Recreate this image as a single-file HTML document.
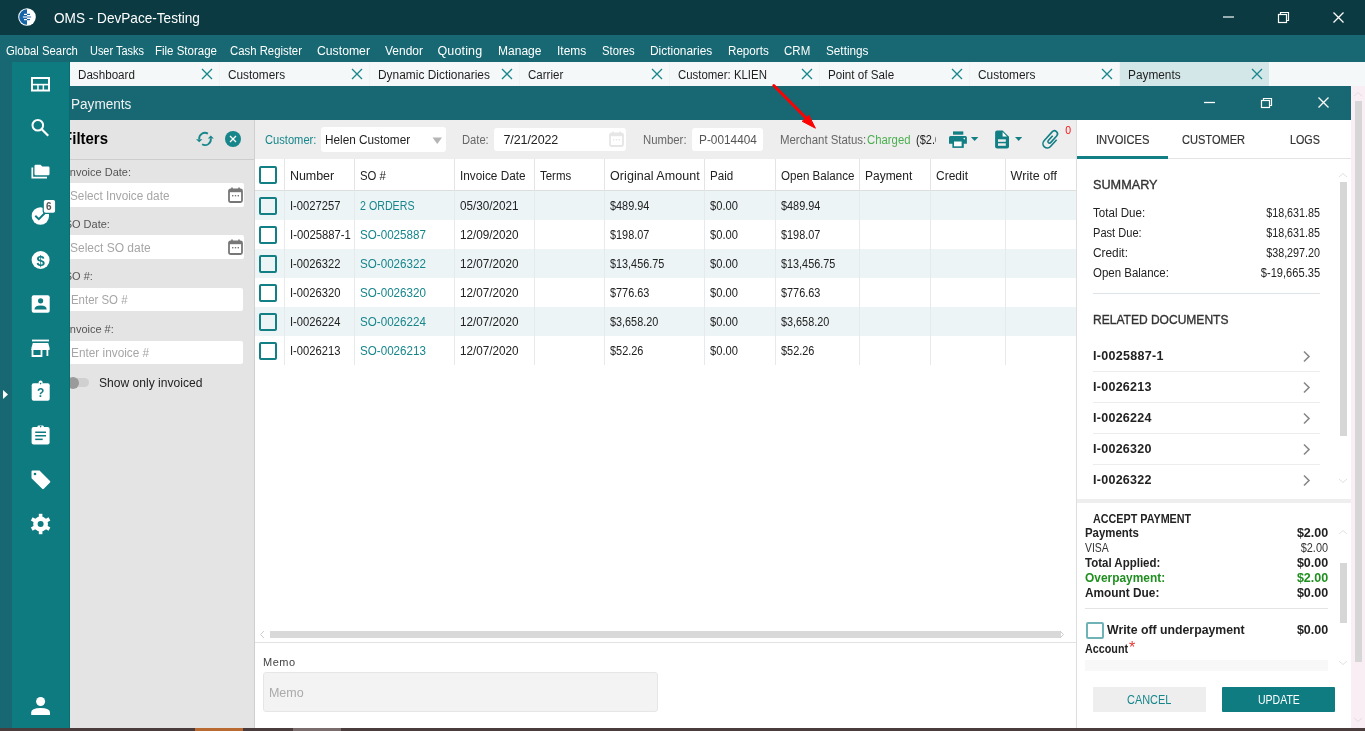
<!DOCTYPE html><html><head><meta charset="utf-8"><style>html,body{margin:0;padding:0;width:1365px;height:731px;overflow:hidden;background:#fff;position:relative;}div,span{box-sizing:border-box;}</style></head><body><div style="position:absolute;left:0;top:0;width:1365px;height:731px;overflow:hidden;will-change:transform"><div style="position:absolute;left:0px;top:0px;width:1365px;height:35px;background:#0b3a42;"></div>
<div style="position:absolute;left:0px;top:35px;width:1365px;height:27px;background:#176872;"></div>
<div style="position:absolute;left:0px;top:62px;width:12px;height:666px;background:#176872;"></div>
<div style="position:absolute;left:70px;top:62px;width:1295px;height:24px;background:#f4f8f9;"></div>
<div style="position:absolute;left:1120px;top:62px;width:149px;height:24px;background:#d3e7e9;"></div>
<div style="position:absolute;left:219px;top:62px;width:1px;height:24px;background:#eef3f4;"></div>
<div style="position:absolute;left:369px;top:62px;width:1px;height:24px;background:#eef3f4;"></div>
<div style="position:absolute;left:519px;top:62px;width:1px;height:24px;background:#eef3f4;"></div>
<div style="position:absolute;left:669px;top:62px;width:1px;height:24px;background:#eef3f4;"></div>
<div style="position:absolute;left:819px;top:62px;width:1px;height:24px;background:#eef3f4;"></div>
<div style="position:absolute;left:969px;top:62px;width:1px;height:24px;background:#eef3f4;"></div>
<div style="position:absolute;left:1119px;top:62px;width:1px;height:24px;background:#eef3f4;"></div>
<div style="position:absolute;left:70px;top:86px;width:1281px;height:34px;background:#176872;"></div>
<div style="position:absolute;left:70px;top:120px;width:185px;height:608px;background:#e4e4e4;"></div>
<div style="position:absolute;left:254px;top:120px;width:1px;height:608px;background:#cfcfcf;"></div>
<div style="position:absolute;left:255px;top:120px;width:821px;height:39px;background:#eeeeee;"></div>
<div style="position:absolute;left:255px;top:159px;width:821px;height:569px;background:#ffffff;"></div>
<div style="position:absolute;left:1076px;top:120px;width:1px;height:608px;background:#dedede;"></div>
<div style="position:absolute;left:1077px;top:120px;width:274px;height:608px;background:#ffffff;"></div>
<div style="position:absolute;left:1351px;top:86px;width:14px;height:642px;background:#f8eef3;"></div>
<div style="position:absolute;left:1355px;top:101px;width:7px;height:561px;background:#d6d6d6;"></div>
<div style="position:absolute;left:12px;top:62px;width:58px;height:666px;background:#0e7b81;"></div>
<div style="position:absolute;left:0px;top:728px;width:1365px;height:3px;background:#4a3b3d;"></div>
<div style="position:absolute;left:195px;top:728px;width:48px;height:3px;background:#b86a30;"></div>
<div style="position:absolute;left:293px;top:728px;width:48px;height:3px;background:#7a6b6c;"></div>
<div style="position:absolute;left:53.90px;top:10.15px;font:normal 15px/1 'Liberation Sans', sans-serif;color:#ffffff;white-space:pre;transform:scaleX(0.9069);transform-origin:left top;">OMS - DevPace-Testing</div>
<svg style="position:absolute;left:17px;top:7px" width="20" height="20" viewBox="0 0 20 20"><circle cx="10" cy="10" r="8.8" fill="#fff"/><path d="M10 2.2 A7.8 7.8 0 0 0 10 17.8 Z" fill="#1565a8"/><g fill="#ffffff"><rect x="7" y="6.8" width="3" height="1.2"/><rect x="5.9" y="9.2" width="4.1" height="1.6" fill="#b9cfe3"/><rect x="7" y="12" width="3" height="1.2"/></g><g fill="#1565a8"><rect x="10" y="6.8" width="3" height="1.2"/><rect x="10" y="9.2" width="4.1" height="1.6" fill="#7fa6cc"/><rect x="10" y="12" width="3" height="1.2"/></g></svg>
<svg style="position:absolute;left:1215px;top:8px" width="140" height="20"><path d="M8 9 H19" stroke="#e8eeee" stroke-width="1.3"/><rect x="63.5" y="6.5" width="8" height="8" fill="none" stroke="#fff" stroke-width="1.2"/><path d="M65.5 6.5 V4.5 H73.5 V12.5 H71.5" fill="none" stroke="#fff" stroke-width="1.2"/><path d="M118.5 4.5 L128.5 14.5 M128.5 4.5 L118.5 14.5" stroke="#fff" stroke-width="1.3"/></svg>
<div style="position:absolute;left:5.90px;top:45.17px;font:normal 12.5px/1 'Liberation Sans', sans-serif;color:#ffffff;white-space:pre;transform:scaleX(0.9077);transform-origin:left top;">Global Search</div>
<div style="position:absolute;left:89.50px;top:45.17px;font:normal 12.5px/1 'Liberation Sans', sans-serif;color:#ffffff;white-space:pre;transform:scaleX(0.8747);transform-origin:left top;">User Tasks</div>
<div style="position:absolute;left:154.50px;top:45.17px;font:normal 12.5px/1 'Liberation Sans', sans-serif;color:#ffffff;white-space:pre;transform:scaleX(0.9186);transform-origin:left top;">File Storage</div>
<div style="position:absolute;left:229.50px;top:45.17px;font:normal 12.5px/1 'Liberation Sans', sans-serif;color:#ffffff;white-space:pre;transform:scaleX(0.9079);transform-origin:left top;">Cash Register</div>
<div style="position:absolute;left:316.50px;top:45.17px;font:normal 12.5px/1 'Liberation Sans', sans-serif;color:#ffffff;white-space:pre;transform:scaleX(0.9777);transform-origin:left top;">Customer</div>
<div style="position:absolute;left:384.50px;top:45.17px;font:normal 12.5px/1 'Liberation Sans', sans-serif;color:#ffffff;white-space:pre;transform:scaleX(0.9579);transform-origin:left top;">Vendor</div>
<div style="position:absolute;left:437.40px;top:45.17px;font:normal 12.5px/1 'Liberation Sans', sans-serif;color:#ffffff;white-space:pre;letter-spacing:0.170px;">Quoting</div>
<div style="position:absolute;left:497.70px;top:45.17px;font:normal 12.5px/1 'Liberation Sans', sans-serif;color:#ffffff;white-space:pre;transform:scaleX(0.9618);transform-origin:left top;">Manage</div>
<div style="position:absolute;left:556.70px;top:45.17px;font:normal 12.5px/1 'Liberation Sans', sans-serif;color:#ffffff;white-space:pre;transform:scaleX(0.9573);transform-origin:left top;">Items</div>
<div style="position:absolute;left:601.50px;top:45.17px;font:normal 12.5px/1 'Liberation Sans', sans-serif;color:#ffffff;white-space:pre;transform:scaleX(0.9021);transform-origin:left top;">Stores</div>
<div style="position:absolute;left:649.70px;top:45.17px;font:normal 12.5px/1 'Liberation Sans', sans-serif;color:#ffffff;white-space:pre;transform:scaleX(0.9532);transform-origin:left top;">Dictionaries</div>
<div style="position:absolute;left:727.50px;top:45.17px;font:normal 12.5px/1 'Liberation Sans', sans-serif;color:#ffffff;white-space:pre;transform:scaleX(0.9303);transform-origin:left top;">Reports</div>
<div style="position:absolute;left:783.80px;top:45.17px;font:normal 12.5px/1 'Liberation Sans', sans-serif;color:#ffffff;white-space:pre;transform:scaleX(0.9210);transform-origin:left top;">CRM</div>
<div style="position:absolute;left:825.60px;top:45.17px;font:normal 12.5px/1 'Liberation Sans', sans-serif;color:#ffffff;white-space:pre;transform:scaleX(0.9395);transform-origin:left top;">Settings</div>
<div style="position:absolute;left:78.00px;top:68.97px;font:normal 12.5px/1 'Liberation Sans', sans-serif;color:#1e1e1e;white-space:pre;transform:scaleX(0.9309);transform-origin:left top;">Dashboard</div>
<div style="position:absolute;left:228.30px;top:68.97px;font:normal 12.5px/1 'Liberation Sans', sans-serif;color:#1e1e1e;white-space:pre;transform:scaleX(0.9455);transform-origin:left top;">Customers</div>
<div style="position:absolute;left:378.00px;top:68.97px;font:normal 12.5px/1 'Liberation Sans', sans-serif;color:#1e1e1e;white-space:pre;transform:scaleX(0.9536);transform-origin:left top;">Dynamic Dictionaries</div>
<div style="position:absolute;left:528.00px;top:68.97px;font:normal 12.5px/1 'Liberation Sans', sans-serif;color:#1e1e1e;white-space:pre;transform:scaleX(0.9220);transform-origin:left top;">Carrier</div>
<div style="position:absolute;left:678.00px;top:68.97px;font:normal 12.5px/1 'Liberation Sans', sans-serif;color:#1e1e1e;white-space:pre;transform:scaleX(0.9141);transform-origin:left top;">Customer: KLIEN</div>
<div style="position:absolute;left:828.10px;top:68.97px;font:normal 12.5px/1 'Liberation Sans', sans-serif;color:#1e1e1e;white-space:pre;transform:scaleX(0.9329);transform-origin:left top;">Point of Sale</div>
<div style="position:absolute;left:977.90px;top:68.97px;font:normal 12.5px/1 'Liberation Sans', sans-serif;color:#1e1e1e;white-space:pre;transform:scaleX(0.9506);transform-origin:left top;">Customers</div>
<div style="position:absolute;left:1127.80px;top:68.97px;font:normal 12.5px/1 'Liberation Sans', sans-serif;color:#1e1e1e;white-space:pre;transform:scaleX(0.9470);transform-origin:left top;">Payments</div>
<svg style="position:absolute;left:0;top:0" width="1365" height="90"><g stroke="#16868b" stroke-width="1.3" fill="none"><path d="M202 69 L212 79 M212 69 L202 79"/><path d="M352 69 L362 79 M362 69 L352 79"/><path d="M502 69 L512 79 M512 69 L502 79"/><path d="M652 69 L662 79 M662 69 L652 79"/><path d="M802 69 L812 79 M812 69 L802 79"/><path d="M952 69 L962 79 M962 69 L952 79"/><path d="M1102 69 L1112 79 M1112 69 L1102 79"/><path d="M1252 69 L1262 79 M1262 69 L1252 79"/></g></svg>
<div style="position:absolute;left:70.90px;top:97.10px;font:normal 14px/1 'Liberation Sans', sans-serif;color:#f2f2f2;white-space:pre;transform:scaleX(0.9698);transform-origin:left top;">Payments</div>
<svg style="position:absolute;left:1195px;top:90px" width="150" height="26"><path d="M9 12.5 H20" stroke="#fff" stroke-width="1.3"/><rect x="66.5" y="10.5" width="8" height="7" fill="none" stroke="#fff" stroke-width="1.2"/><path d="M68.5 10.5 V8.5 H76.5 V15.5 H74.5" fill="none" stroke="#fff" stroke-width="1.2"/><path d="M123.5 7.5 L133.5 17.5 M133.5 7.5 L123.5 17.5" stroke="#fff" stroke-width="1.3"/></svg>
<div style="position:absolute;left:70px;top:159px;width:184px;height:1px;background:#cdcdcd;"></div>
<div style="position:absolute;left:59.98px;top:131.20px;font:bold 16px/1 'Liberation Sans', sans-serif;color:#000000;white-space:pre;transform:scaleX(0.9359);transform-origin:right top;">Filters</div>
<svg style="position:absolute;left:193px;top:127px" width="52" height="25"><g fill="none" stroke="#16868b" stroke-width="1.8"><path d="M14.9 6.6 A5.8 5.8 0 0 0 6.2 12.2"/><path d="M9.1 17.3 A5.8 5.8 0 0 0 17.8 11.4"/></g><path d="M3 12.2 H9.4 L6.2 15.2 Z" fill="#16868b"/><path d="M14.8 11.4 H20.8 L17.8 8.6 Z" fill="#16868b"/><circle cx="40" cy="12" r="8" fill="#16868b"/><path d="M37 9 L43 15 M43 9 L37 15" stroke="#fff" stroke-width="1.3"/></svg>
<div style="position:absolute;left:66.80px;top:166.65px;font:normal 11px/1 'Liberation Sans', sans-serif;color:#555555;white-space:pre;">Invoice Date:</div>
<div style="position:absolute;left:62px;top:183px;width:182px;height:24px;background:#ffffff;border-radius:2px;"></div>
<div style="position:absolute;left:70.00px;top:189.80px;font:normal 12px/1 'Liberation Sans', sans-serif;color:#a6a6a6;white-space:pre;transform:scaleX(0.9810);transform-origin:left top;">Select Invoice date</div>
<div style="position:absolute;left:64.65px;top:218.65px;font:normal 11px/1 'Liberation Sans', sans-serif;color:#555555;white-space:pre;">SO Date:</div>
<div style="position:absolute;left:62px;top:235px;width:182px;height:24px;background:#ffffff;border-radius:2px;"></div>
<div style="position:absolute;left:70.00px;top:241.80px;font:normal 12px/1 'Liberation Sans', sans-serif;color:#a6a6a6;white-space:pre;">Select SO date</div>
<svg style="position:absolute;left:227.5px;top:187px" width="16" height="17"><rect x="1" y="2.5" width="13" height="12.5" rx="1.5" fill="none" stroke="#777777" stroke-width="1.8"/><rect x="1" y="2" width="13" height="3.2" fill="#777777"/><rect x="3.2" y="0.5" width="1.6" height="3" fill="#777777"/><rect x="10.2" y="0.5" width="1.6" height="3" fill="#777777"/><rect x="4" y="8" width="1.4" height="1.4" fill="#777777"/><rect x="6.8" y="8" width="1.4" height="1.4" fill="#777777"/><rect x="9.6" y="8" width="1.4" height="1.4" fill="#777777"/></svg>
<svg style="position:absolute;left:227.5px;top:239px" width="16" height="17"><rect x="1" y="2.5" width="13" height="12.5" rx="1.5" fill="none" stroke="#777777" stroke-width="1.8"/><rect x="1" y="2" width="13" height="3.2" fill="#777777"/><rect x="3.2" y="0.5" width="1.6" height="3" fill="#777777"/><rect x="10.2" y="0.5" width="1.6" height="3" fill="#777777"/><rect x="4" y="8" width="1.4" height="1.4" fill="#777777"/><rect x="6.8" y="8" width="1.4" height="1.4" fill="#777777"/><rect x="9.6" y="8" width="1.4" height="1.4" fill="#777777"/></svg>
<div style="position:absolute;left:64.78px;top:270.65px;font:normal 11px/1 'Liberation Sans', sans-serif;color:#555555;white-space:pre;">SO #:</div>
<div style="position:absolute;left:62px;top:288px;width:181px;height:23px;background:#ffffff;border-radius:2px;"></div>
<div style="position:absolute;left:71.20px;top:293.80px;font:normal 12px/1 'Liberation Sans', sans-serif;color:#a6a6a6;white-space:pre;transform:scaleX(0.9525);transform-origin:left top;">Enter SO #</div>
<div style="position:absolute;left:66.71px;top:323.65px;font:normal 11px/1 'Liberation Sans', sans-serif;color:#555555;white-space:pre;">Invoice #:</div>
<div style="position:absolute;left:62px;top:341px;width:181px;height:23px;background:#ffffff;border-radius:2px;"></div>
<div style="position:absolute;left:71.20px;top:346.80px;font:normal 12px/1 'Liberation Sans', sans-serif;color:#a6a6a6;white-space:pre;transform:scaleX(0.9848);transform-origin:left top;">Enter invoice #</div>
<div style="position:absolute;left:68px;top:378px;width:21px;height:9px;background:#d0d0d0;border-radius:5px;"></div>
<div style="position:absolute;left:67px;top:376.5px;width:12px;height:12px;background:#9a9a9a;border-radius:50%;"></div>
<div style="position:absolute;left:98.50px;top:377.38px;font:normal 12.5px/1 'Liberation Sans', sans-serif;color:#222222;white-space:pre;transform:scaleX(0.9659);transform-origin:left top;">Show only invoiced</div>
<div style="position:absolute;left:265.00px;top:134.30px;font:normal 12px/1 'Liberation Sans', sans-serif;color:#16868b;white-space:pre;transform:scaleX(0.9290);transform-origin:left top;">Customer:</div>
<div style="position:absolute;left:321px;top:127px;width:125px;height:25px;background:#ffffff;border-radius:3px;"></div>
<div style="position:absolute;left:325.00px;top:133.88px;font:normal 12.5px/1 'Liberation Sans', sans-serif;color:#222222;white-space:pre;transform:scaleX(0.9426);transform-origin:left top;">Helen Customer</div>
<svg style="position:absolute;left:432px;top:137px" width="11" height="8"><path d="M0.5 0.5 H10 L5.25 7 Z" fill="#b5b5b5"/></svg>
<div style="position:absolute;left:462.10px;top:134.30px;font:normal 12px/1 'Liberation Sans', sans-serif;color:#666666;white-space:pre;transform:scaleX(0.9318);transform-origin:left top;">Date:</div>
<div style="position:absolute;left:494px;top:128px;width:132px;height:23px;background:#ffffff;border-radius:3px;"></div>
<div style="position:absolute;left:503.50px;top:133.88px;font:normal 12.5px/1 'Liberation Sans', sans-serif;color:#222222;white-space:pre;letter-spacing:-0.101px;">7/21/2022</div>
<svg style="position:absolute;left:608.5px;top:131px" width="16" height="17"><rect x="1" y="2.5" width="13" height="12.5" rx="1.5" fill="none" stroke="#e6e6e6" stroke-width="1.8"/><rect x="1" y="2" width="13" height="3.2" fill="#e6e6e6"/><rect x="3.2" y="0.5" width="1.6" height="3" fill="#e6e6e6"/><rect x="10.2" y="0.5" width="1.6" height="3" fill="#e6e6e6"/><rect x="4" y="8" width="1.4" height="1.4" fill="#e6e6e6"/><rect x="6.8" y="8" width="1.4" height="1.4" fill="#e6e6e6"/><rect x="9.6" y="8" width="1.4" height="1.4" fill="#e6e6e6"/></svg>
<div style="position:absolute;left:643.20px;top:134.30px;font:normal 12px/1 'Liberation Sans', sans-serif;color:#666666;white-space:pre;transform:scaleX(0.9463);transform-origin:left top;">Number:</div>
<div style="position:absolute;left:692px;top:128px;width:71px;height:23px;background:#ffffff;border-radius:3px;"></div>
<div style="position:absolute;left:698.80px;top:133.88px;font:normal 12.5px/1 'Liberation Sans', sans-serif;color:#555555;white-space:pre;transform:scaleX(0.9473);transform-origin:left top;">P-0014404</div>
<div style="position:absolute;left:780.20px;top:134.30px;font:normal 12px/1 'Liberation Sans', sans-serif;color:#666666;white-space:pre;transform:scaleX(0.9507);transform-origin:left top;">Merchant Status:</div>
<div style="position:absolute;left:867.10px;top:134.30px;font:normal 12px/1 'Liberation Sans', sans-serif;color:#4caf50;white-space:pre;transform:scaleX(0.9460);transform-origin:left top;">Charged</div>
<div style="position:absolute;left:915px;top:128px;width:21px;height:22px;overflow:hidden"><div style="position:absolute;left:1px;top:5.90px;font:12.5px/1 'Liberation Sans', sans-serif;color:#222;white-space:pre;transform:scaleX(0.88);transform-origin:left top">($2.00)</div></div>
<svg style="position:absolute;left:940px;top:122px" width="90" height="30"><g fill="#127f85"><rect x="13" y="9.4" width="10.3" height="3.3"/><path d="M9 15.5 Q9 14 10.5 14 H25.4 Q26.9 14 26.9 15.5 V21.8 H9 Z"/><rect x="12.4" y="18.3" width="11.4" height="7.6"/><path d="M30.9 15 H38.4 L34.65 19 Z"/><path d="M55.1 10.4 Q55.1 8.4 57.1 8.4 H62.6 L69 14.8 V24.5 Q69 26.5 67 26.5 H57.1 Q55.1 26.5 55.1 24.5 Z"/><path d="M75 15 H82.2 L78.6 19 Z"/></g><rect x="14" y="19.5" width="7.6" height="4.8" fill="#fff"/><circle cx="24.3" cy="16.6" r="0.8" fill="#fff"/><path d="M62.6 9.9 V14.4 H67 Z" fill="#fff"/><rect x="58" y="17.3" width="7.8" height="2.5" fill="#eee"/><rect x="58" y="21.3" width="7.8" height="2.5" fill="#eee"/></svg>
<svg style="position:absolute;left:1038px;top:126px" width="26" height="26" viewBox="0 0 26 26"><g transform="translate(13.3 13.2) rotate(42)"><path d="M4.3 -3.2 V6 A4.3 4.3 0 0 1 -4.3 6 V-6 A3.05 3.05 0 0 1 1.8 -6 V3 A1.55 1.55 0 0 1 -1.3 3 V-3.5" fill="none" stroke="#127f85" stroke-width="1.6"/></g></svg>
<div style="position:absolute;left:1065.30px;top:125.08px;font:normal 10.5px/1 'Liberation Sans', sans-serif;color:#ff1010;white-space:pre;">0</div>
<div style="position:absolute;left:255px;top:190px;width:821px;height:1px;background:#dedede;"></div>
<div style="position:absolute;left:284px;top:159px;width:1px;height:206px;background:#e4e4e4;"></div>
<div style="position:absolute;left:354px;top:159px;width:1px;height:206px;background:#e4e4e4;"></div>
<div style="position:absolute;left:454px;top:159px;width:1px;height:206px;background:#e4e4e4;"></div>
<div style="position:absolute;left:534px;top:159px;width:1px;height:206px;background:#e4e4e4;"></div>
<div style="position:absolute;left:604px;top:159px;width:1px;height:206px;background:#e4e4e4;"></div>
<div style="position:absolute;left:704px;top:159px;width:1px;height:206px;background:#e4e4e4;"></div>
<div style="position:absolute;left:775px;top:159px;width:1px;height:206px;background:#e4e4e4;"></div>
<div style="position:absolute;left:859px;top:159px;width:1px;height:206px;background:#e4e4e4;"></div>
<div style="position:absolute;left:930px;top:159px;width:1px;height:206px;background:#e4e4e4;"></div>
<div style="position:absolute;left:1005px;top:159px;width:1px;height:206px;background:#e4e4e4;"></div>
<div style="position:absolute;left:255px;top:191px;width:821px;height:29px;background:#edf4f6;"></div>
<div style="position:absolute;left:255px;top:249px;width:821px;height:29px;background:#edf4f6;"></div>
<div style="position:absolute;left:255px;top:307px;width:821px;height:29px;background:#edf4f6;"></div>
<div style="position:absolute;left:284px;top:191px;width:1px;height:174px;background:#e6eaec;"></div>
<div style="position:absolute;left:354px;top:191px;width:1px;height:174px;background:#e6eaec;"></div>
<div style="position:absolute;left:454px;top:191px;width:1px;height:174px;background:#e6eaec;"></div>
<div style="position:absolute;left:534px;top:191px;width:1px;height:174px;background:#e6eaec;"></div>
<div style="position:absolute;left:604px;top:191px;width:1px;height:174px;background:#e6eaec;"></div>
<div style="position:absolute;left:704px;top:191px;width:1px;height:174px;background:#e6eaec;"></div>
<div style="position:absolute;left:775px;top:191px;width:1px;height:174px;background:#e6eaec;"></div>
<div style="position:absolute;left:859px;top:191px;width:1px;height:174px;background:#e6eaec;"></div>
<div style="position:absolute;left:930px;top:191px;width:1px;height:174px;background:#e6eaec;"></div>
<div style="position:absolute;left:1005px;top:191px;width:1px;height:174px;background:#e6eaec;"></div>
<div style="position:absolute;left:289.90px;top:169.88px;font:normal 12.5px/1 'Liberation Sans', sans-serif;color:#222222;white-space:pre;letter-spacing:-0.034px;">Number</div>
<div style="position:absolute;left:359.90px;top:169.88px;font:normal 12.5px/1 'Liberation Sans', sans-serif;color:#222222;white-space:pre;transform:scaleX(0.9091);transform-origin:left top;">SO #</div>
<div style="position:absolute;left:459.90px;top:169.88px;font:normal 12.5px/1 'Liberation Sans', sans-serif;color:#222222;white-space:pre;transform:scaleX(0.9433);transform-origin:left top;">Invoice Date</div>
<div style="position:absolute;left:540.00px;top:169.88px;font:normal 12.5px/1 'Liberation Sans', sans-serif;color:#222222;white-space:pre;transform:scaleX(0.9173);transform-origin:left top;">Terms</div>
<div style="position:absolute;left:610.10px;top:169.88px;font:normal 12.5px/1 'Liberation Sans', sans-serif;color:#222222;white-space:pre;letter-spacing:0.047px;">Original Amount</div>
<div style="position:absolute;left:709.80px;top:169.88px;font:normal 12.5px/1 'Liberation Sans', sans-serif;color:#222222;white-space:pre;transform:scaleX(0.9280);transform-origin:left top;">Paid</div>
<div style="position:absolute;left:781.00px;top:169.88px;font:normal 12.5px/1 'Liberation Sans', sans-serif;color:#222222;white-space:pre;transform:scaleX(0.9267);transform-origin:left top;">Open Balance</div>
<div style="position:absolute;left:865.30px;top:169.88px;font:normal 12.5px/1 'Liberation Sans', sans-serif;color:#222222;white-space:pre;transform:scaleX(0.9577);transform-origin:left top;">Payment</div>
<div style="position:absolute;left:936.20px;top:169.88px;font:normal 12.5px/1 'Liberation Sans', sans-serif;color:#222222;white-space:pre;transform:scaleX(0.9585);transform-origin:left top;">Credit</div>
<div style="position:absolute;left:1010.60px;top:169.88px;font:normal 12.5px/1 'Liberation Sans', sans-serif;color:#222222;white-space:pre;letter-spacing:0.051px;">Write off</div>
<div style="position:absolute;left:259px;top:166px;width:18px;height:18px;background:transparent;border:2.2px solid #127f85;border-radius:2px;"></div>
<div style="position:absolute;left:259px;top:197px;width:18px;height:18px;background:transparent;border:2.2px solid #127f85;border-radius:2px;"></div>
<div style="position:absolute;left:289.70px;top:199.68px;font:normal 12.5px/1 'Liberation Sans', sans-serif;color:#222222;white-space:pre;transform:scaleX(0.8949);transform-origin:left top;">I-0027257</div>
<div style="position:absolute;left:360.00px;top:199.68px;font:normal 12.5px/1 'Liberation Sans', sans-serif;color:#16868b;white-space:pre;transform:scaleX(0.8537);transform-origin:left top;">2 ORDERS</div>
<div style="position:absolute;left:459.50px;top:199.68px;font:normal 12.5px/1 'Liberation Sans', sans-serif;color:#222222;white-space:pre;transform:scaleX(0.9373);transform-origin:left top;">05/30/2021</div>
<div style="position:absolute;left:609.90px;top:199.68px;font:normal 12.5px/1 'Liberation Sans', sans-serif;color:#222222;white-space:pre;transform:scaleX(0.8713);transform-origin:left top;">$489.94</div>
<div style="position:absolute;left:709.90px;top:199.68px;font:normal 12.5px/1 'Liberation Sans', sans-serif;color:#222222;white-space:pre;transform:scaleX(0.8916);transform-origin:left top;">$0.00</div>
<div style="position:absolute;left:781.00px;top:199.68px;font:normal 12.5px/1 'Liberation Sans', sans-serif;color:#222222;white-space:pre;transform:scaleX(0.8713);transform-origin:left top;">$489.94</div>
<div style="position:absolute;left:259px;top:226px;width:18px;height:18px;background:transparent;border:2.2px solid #127f85;border-radius:2px;"></div>
<div style="position:absolute;left:289.70px;top:228.68px;font:normal 12.5px/1 'Liberation Sans', sans-serif;color:#222222;white-space:pre;transform:scaleX(0.9033);transform-origin:left top;">I-0025887-1</div>
<div style="position:absolute;left:360.00px;top:228.68px;font:normal 12.5px/1 'Liberation Sans', sans-serif;color:#16868b;white-space:pre;transform:scaleX(0.9300);transform-origin:left top;">SO-0025887</div>
<div style="position:absolute;left:459.50px;top:228.68px;font:normal 12.5px/1 'Liberation Sans', sans-serif;color:#222222;white-space:pre;transform:scaleX(0.9373);transform-origin:left top;">12/09/2020</div>
<div style="position:absolute;left:609.90px;top:228.68px;font:normal 12.5px/1 'Liberation Sans', sans-serif;color:#222222;white-space:pre;transform:scaleX(0.8713);transform-origin:left top;">$198.07</div>
<div style="position:absolute;left:709.90px;top:228.68px;font:normal 12.5px/1 'Liberation Sans', sans-serif;color:#222222;white-space:pre;transform:scaleX(0.8916);transform-origin:left top;">$0.00</div>
<div style="position:absolute;left:781.00px;top:228.68px;font:normal 12.5px/1 'Liberation Sans', sans-serif;color:#222222;white-space:pre;transform:scaleX(0.8713);transform-origin:left top;">$198.07</div>
<div style="position:absolute;left:259px;top:255px;width:18px;height:18px;background:transparent;border:2.2px solid #127f85;border-radius:2px;"></div>
<div style="position:absolute;left:289.70px;top:257.68px;font:normal 12.5px/1 'Liberation Sans', sans-serif;color:#222222;white-space:pre;transform:scaleX(0.8949);transform-origin:left top;">I-0026322</div>
<div style="position:absolute;left:360.00px;top:257.68px;font:normal 12.5px/1 'Liberation Sans', sans-serif;color:#16868b;white-space:pre;transform:scaleX(0.9300);transform-origin:left top;">SO-0026322</div>
<div style="position:absolute;left:459.50px;top:257.68px;font:normal 12.5px/1 'Liberation Sans', sans-serif;color:#222222;white-space:pre;transform:scaleX(0.9373);transform-origin:left top;">12/07/2020</div>
<div style="position:absolute;left:609.90px;top:257.68px;font:normal 12.5px/1 'Liberation Sans', sans-serif;color:#222222;white-space:pre;transform:scaleX(0.8674);transform-origin:left top;">$13,456.75</div>
<div style="position:absolute;left:709.90px;top:257.68px;font:normal 12.5px/1 'Liberation Sans', sans-serif;color:#222222;white-space:pre;transform:scaleX(0.8916);transform-origin:left top;">$0.00</div>
<div style="position:absolute;left:781.00px;top:257.68px;font:normal 12.5px/1 'Liberation Sans', sans-serif;color:#222222;white-space:pre;transform:scaleX(0.8674);transform-origin:left top;">$13,456.75</div>
<div style="position:absolute;left:259px;top:284px;width:18px;height:18px;background:transparent;border:2.2px solid #127f85;border-radius:2px;"></div>
<div style="position:absolute;left:289.70px;top:286.68px;font:normal 12.5px/1 'Liberation Sans', sans-serif;color:#222222;white-space:pre;transform:scaleX(0.8949);transform-origin:left top;">I-0026320</div>
<div style="position:absolute;left:360.00px;top:286.68px;font:normal 12.5px/1 'Liberation Sans', sans-serif;color:#16868b;white-space:pre;transform:scaleX(0.9300);transform-origin:left top;">SO-0026320</div>
<div style="position:absolute;left:459.50px;top:286.68px;font:normal 12.5px/1 'Liberation Sans', sans-serif;color:#222222;white-space:pre;transform:scaleX(0.9373);transform-origin:left top;">12/07/2020</div>
<div style="position:absolute;left:609.90px;top:286.68px;font:normal 12.5px/1 'Liberation Sans', sans-serif;color:#222222;white-space:pre;transform:scaleX(0.8713);transform-origin:left top;">$776.63</div>
<div style="position:absolute;left:709.90px;top:286.68px;font:normal 12.5px/1 'Liberation Sans', sans-serif;color:#222222;white-space:pre;transform:scaleX(0.8916);transform-origin:left top;">$0.00</div>
<div style="position:absolute;left:781.00px;top:286.68px;font:normal 12.5px/1 'Liberation Sans', sans-serif;color:#222222;white-space:pre;transform:scaleX(0.8713);transform-origin:left top;">$776.63</div>
<div style="position:absolute;left:259px;top:313px;width:18px;height:18px;background:transparent;border:2.2px solid #127f85;border-radius:2px;"></div>
<div style="position:absolute;left:289.70px;top:315.68px;font:normal 12.5px/1 'Liberation Sans', sans-serif;color:#222222;white-space:pre;transform:scaleX(0.8949);transform-origin:left top;">I-0026224</div>
<div style="position:absolute;left:360.00px;top:315.68px;font:normal 12.5px/1 'Liberation Sans', sans-serif;color:#16868b;white-space:pre;transform:scaleX(0.9300);transform-origin:left top;">SO-0026224</div>
<div style="position:absolute;left:459.50px;top:315.68px;font:normal 12.5px/1 'Liberation Sans', sans-serif;color:#222222;white-space:pre;transform:scaleX(0.9373);transform-origin:left top;">12/07/2020</div>
<div style="position:absolute;left:609.90px;top:315.68px;font:normal 12.5px/1 'Liberation Sans', sans-serif;color:#222222;white-space:pre;transform:scaleX(0.8680);transform-origin:left top;">$3,658.20</div>
<div style="position:absolute;left:709.90px;top:315.68px;font:normal 12.5px/1 'Liberation Sans', sans-serif;color:#222222;white-space:pre;transform:scaleX(0.8916);transform-origin:left top;">$0.00</div>
<div style="position:absolute;left:781.00px;top:315.68px;font:normal 12.5px/1 'Liberation Sans', sans-serif;color:#222222;white-space:pre;transform:scaleX(0.8680);transform-origin:left top;">$3,658.20</div>
<div style="position:absolute;left:259px;top:342px;width:18px;height:18px;background:transparent;border:2.2px solid #127f85;border-radius:2px;"></div>
<div style="position:absolute;left:289.70px;top:344.68px;font:normal 12.5px/1 'Liberation Sans', sans-serif;color:#222222;white-space:pre;transform:scaleX(0.8949);transform-origin:left top;">I-0026213</div>
<div style="position:absolute;left:360.00px;top:344.68px;font:normal 12.5px/1 'Liberation Sans', sans-serif;color:#16868b;white-space:pre;transform:scaleX(0.9300);transform-origin:left top;">SO-0026213</div>
<div style="position:absolute;left:459.50px;top:344.68px;font:normal 12.5px/1 'Liberation Sans', sans-serif;color:#222222;white-space:pre;transform:scaleX(0.9373);transform-origin:left top;">12/07/2020</div>
<div style="position:absolute;left:609.90px;top:344.68px;font:normal 12.5px/1 'Liberation Sans', sans-serif;color:#222222;white-space:pre;transform:scaleX(0.8728);transform-origin:left top;">$52.26</div>
<div style="position:absolute;left:709.90px;top:344.68px;font:normal 12.5px/1 'Liberation Sans', sans-serif;color:#222222;white-space:pre;transform:scaleX(0.8916);transform-origin:left top;">$0.00</div>
<div style="position:absolute;left:781.00px;top:344.68px;font:normal 12.5px/1 'Liberation Sans', sans-serif;color:#222222;white-space:pre;transform:scaleX(0.8728);transform-origin:left top;">$52.26</div>
<div style="position:absolute;left:270px;top:631px;width:791px;height:7px;background:#d9d9d9;"></div>
<svg style="position:absolute;left:258px;top:629px" width="810" height="12"><path d="M6 2 L2.5 5.5 L6 9" fill="none" stroke="#ccc" stroke-width="1"/><path d="M802 2 L805.5 5.5 L802 9" fill="none" stroke="#ccc" stroke-width="1"/></svg>
<div style="position:absolute;left:255px;top:642px;width:821px;height:1px;background:#e2e2e2;"></div>
<div style="position:absolute;left:263.10px;top:656.65px;font:normal 11px/1 'Liberation Sans', sans-serif;color:#444444;white-space:pre;letter-spacing:0.446px;">Memo</div>
<div style="position:absolute;left:263px;top:672px;width:395px;height:40px;background:#f3f3f3;border:1px solid #e6e6e6;border-radius:3px;"></div>
<div style="position:absolute;left:268.90px;top:687.17px;font:normal 12.5px/1 'Liberation Sans', sans-serif;color:#aaaaaa;white-space:pre;">Memo</div>
<div style="position:absolute;left:1077px;top:158px;width:274px;height:1px;background:#e3e3e3;"></div>
<div style="position:absolute;left:1077px;top:156px;width:91px;height:3px;background:#127f85;"></div>
<div style="position:absolute;left:1095.90px;top:133.05px;font:normal 13px/1 'Liberation Sans', sans-serif;color:#333333;white-space:pre;transform:scaleX(0.8605);transform-origin:left top;-webkit-text-stroke:0.2px #333;">INVOICES</div>
<div style="position:absolute;left:1182.30px;top:133.05px;font:normal 13px/1 'Liberation Sans', sans-serif;color:#333333;white-space:pre;transform:scaleX(0.8502);transform-origin:left top;-webkit-text-stroke:0.2px #333;">CUSTOMER</div>
<div style="position:absolute;left:1290.40px;top:133.05px;font:normal 13px/1 'Liberation Sans', sans-serif;color:#333333;white-space:pre;transform:scaleX(0.8285);transform-origin:left top;-webkit-text-stroke:0.2px #333;">LOGS</div>
<svg style="position:absolute;left:1336px;top:168px" width="14" height="320"><path d="M3 9 L7 5.5 L11 9" fill="none" stroke="#e0e0e0" stroke-width="1"/><path d="M3 311 L7 314.5 L11 311" fill="none" stroke="#e0e0e0" stroke-width="1"/></svg>
<div style="position:absolute;left:1340px;top:182px;width:7px;height:254px;background:#d6d6d6;"></div>
<div style="position:absolute;left:1092.80px;top:177.95px;font:normal 13px/1 'Liberation Sans', sans-serif;color:#333333;white-space:pre;transform:scaleX(0.9752);transform-origin:left top;-webkit-text-stroke:0.35px #333;">SUMMARY</div>
<div style="position:absolute;left:1093.00px;top:206.88px;font:normal 12.5px/1 'Liberation Sans', sans-serif;color:#222222;white-space:pre;transform:scaleX(0.9262);transform-origin:left top;">Total Due:</div>
<div style="position:absolute;left:1260.44px;top:207.30px;font:normal 12px/1 'Liberation Sans', sans-serif;color:#222222;white-space:pre;transform:scaleX(0.8974);transform-origin:right top;">$18,631.85</div>
<div style="position:absolute;left:1093.00px;top:226.88px;font:normal 12.5px/1 'Liberation Sans', sans-serif;color:#222222;white-space:pre;transform:scaleX(0.8870);transform-origin:left top;">Past Due:</div>
<div style="position:absolute;left:1260.44px;top:227.30px;font:normal 12px/1 'Liberation Sans', sans-serif;color:#222222;white-space:pre;transform:scaleX(0.8974);transform-origin:right top;">$18,631.85</div>
<div style="position:absolute;left:1093.00px;top:246.88px;font:normal 12.5px/1 'Liberation Sans', sans-serif;color:#222222;white-space:pre;transform:scaleX(0.9490);transform-origin:left top;">Credit:</div>
<div style="position:absolute;left:1260.44px;top:247.30px;font:normal 12px/1 'Liberation Sans', sans-serif;color:#222222;white-space:pre;transform:scaleX(0.8974);transform-origin:right top;">$38,297.20</div>
<div style="position:absolute;left:1093.00px;top:266.88px;font:normal 12.5px/1 'Liberation Sans', sans-serif;color:#222222;white-space:pre;transform:scaleX(0.9180);transform-origin:left top;">Open Balance:</div>
<div style="position:absolute;left:1256.44px;top:267.30px;font:normal 12px/1 'Liberation Sans', sans-serif;color:#222222;white-space:pre;transform:scaleX(0.9245);transform-origin:right top;">$-19,665.35</div>
<div style="position:absolute;left:1093px;top:293px;width:227px;height:1px;background:#dde3e6;"></div>
<div style="position:absolute;left:1093.00px;top:314.38px;font:normal 12.5px/1 'Liberation Sans', sans-serif;color:#333333;white-space:pre;transform:scaleX(0.9623);transform-origin:left top;-webkit-text-stroke:0.35px #333;">RELATED DOCUMENTS</div>
<div style="position:absolute;left:1093.00px;top:350.38px;font:bold 12.5px/1 'Liberation Sans', sans-serif;color:#222222;white-space:pre;letter-spacing:0.308px;">I-0025887-1</div>
<svg style="position:absolute;left:1300px;top:349px" width="14" height="14"><path d="M4 2.5 L9 7.5 L4 12.5" fill="none" stroke="#888" stroke-width="1.6"/></svg>
<div style="position:absolute;left:1093px;top:371px;width:227px;height:1px;background:#ececec;"></div>
<div style="position:absolute;left:1093.00px;top:381.38px;font:bold 12.5px/1 'Liberation Sans', sans-serif;color:#222222;white-space:pre;letter-spacing:0.273px;">I-0026213</div>
<svg style="position:absolute;left:1300px;top:380px" width="14" height="14"><path d="M4 2.5 L9 7.5 L4 12.5" fill="none" stroke="#888" stroke-width="1.6"/></svg>
<div style="position:absolute;left:1093px;top:402px;width:227px;height:1px;background:#ececec;"></div>
<div style="position:absolute;left:1093.00px;top:412.38px;font:bold 12.5px/1 'Liberation Sans', sans-serif;color:#222222;white-space:pre;letter-spacing:0.273px;">I-0026224</div>
<svg style="position:absolute;left:1300px;top:411px" width="14" height="14"><path d="M4 2.5 L9 7.5 L4 12.5" fill="none" stroke="#888" stroke-width="1.6"/></svg>
<div style="position:absolute;left:1093px;top:433px;width:227px;height:1px;background:#ececec;"></div>
<div style="position:absolute;left:1093.00px;top:443.38px;font:bold 12.5px/1 'Liberation Sans', sans-serif;color:#222222;white-space:pre;letter-spacing:0.273px;">I-0026320</div>
<svg style="position:absolute;left:1300px;top:442px" width="14" height="14"><path d="M4 2.5 L9 7.5 L4 12.5" fill="none" stroke="#888" stroke-width="1.6"/></svg>
<div style="position:absolute;left:1093px;top:464px;width:227px;height:1px;background:#ececec;"></div>
<div style="position:absolute;left:1093.00px;top:474.38px;font:bold 12.5px/1 'Liberation Sans', sans-serif;color:#222222;white-space:pre;letter-spacing:0.273px;">I-0026322</div>
<svg style="position:absolute;left:1300px;top:473px" width="14" height="14"><path d="M4 2.5 L9 7.5 L4 12.5" fill="none" stroke="#888" stroke-width="1.6"/></svg>
<div style="position:absolute;left:1077px;top:499px;width:274px;height:4px;background:#eeeeee;"></div>
<div style="position:absolute;left:1092.80px;top:512.77px;font:bold 12.5px/1 'Liberation Sans', sans-serif;color:#222222;white-space:pre;transform:scaleX(0.8618);transform-origin:left top;">ACCEPT PAYMENT</div>
<div style="position:absolute;left:1085.10px;top:526.98px;font:bold 12.5px/1 'Liberation Sans', sans-serif;color:#222222;white-space:pre;transform:scaleX(0.9128);transform-origin:left top;">Payments</div>
<div style="position:absolute;left:1296.90px;top:526.98px;font:bold 12.5px/1 'Liberation Sans', sans-serif;color:#222222;white-space:pre;letter-spacing:-0.020px;">$2.00</div>
<div style="position:absolute;left:1085.10px;top:542.40px;font:normal 12px/1 'Liberation Sans', sans-serif;color:#333333;white-space:pre;transform:scaleX(0.8688);transform-origin:left top;">VISA</div>
<div style="position:absolute;left:1298.07px;top:542.40px;font:normal 12px/1 'Liberation Sans', sans-serif;color:#333333;white-space:pre;transform:scaleX(0.9094);transform-origin:right top;">$2.00</div>
<div style="position:absolute;left:1085.10px;top:557.17px;font:bold 12.5px/1 'Liberation Sans', sans-serif;color:#222222;white-space:pre;transform:scaleX(0.9192);transform-origin:left top;">Total Applied:</div>
<div style="position:absolute;left:1296.90px;top:557.17px;font:bold 12.5px/1 'Liberation Sans', sans-serif;color:#222222;white-space:pre;letter-spacing:-0.020px;">$0.00</div>
<div style="position:absolute;left:1085.10px;top:571.77px;font:bold 12.5px/1 'Liberation Sans', sans-serif;color:#1f8f1f;white-space:pre;transform:scaleX(0.9535);transform-origin:left top;">Overpayment:</div>
<div style="position:absolute;left:1296.90px;top:571.77px;font:bold 12.5px/1 'Liberation Sans', sans-serif;color:#1f8f1f;white-space:pre;letter-spacing:-0.020px;">$2.00</div>
<div style="position:absolute;left:1085.10px;top:586.58px;font:bold 12.5px/1 'Liberation Sans', sans-serif;color:#222222;white-space:pre;transform:scaleX(0.9475);transform-origin:left top;">Amount Due:</div>
<div style="position:absolute;left:1296.90px;top:586.58px;font:bold 12.5px/1 'Liberation Sans', sans-serif;color:#222222;white-space:pre;letter-spacing:-0.020px;">$0.00</div>
<div style="position:absolute;left:1085px;top:608px;width:243px;height:1px;background:#e4e4e4;"></div>
<div style="position:absolute;left:1086px;top:622px;width:18px;height:17px;background:transparent;border:2px solid #6fb3b6;border-radius:2px;"></div>
<div style="position:absolute;left:1106.50px;top:623.77px;font:bold 12.5px/1 'Liberation Sans', sans-serif;color:#222222;white-space:pre;transform:scaleX(0.9830);transform-origin:left top;">Write off underpayment</div>
<div style="position:absolute;left:1296.90px;top:623.77px;font:bold 12.5px/1 'Liberation Sans', sans-serif;color:#222222;white-space:pre;letter-spacing:-0.020px;">$0.00</div>
<div style="position:absolute;left:1085.10px;top:642.77px;font:bold 12.5px/1 'Liberation Sans', sans-serif;color:#222222;white-space:pre;transform:scaleX(0.8612);transform-origin:left top;">Account</div>
<div style="position:absolute;left:1128.90px;top:640.40px;font:normal 16px/1 'Liberation Sans', sans-serif;color:#e53935;white-space:pre;">*</div>
<div style="position:absolute;left:1085px;top:660px;width:243px;height:11px;background:#f8f8f8;"></div>
<svg style="position:absolute;left:1336px;top:525px" width="14" height="145"><path d="M3 9 L7 5.5 L11 9" fill="none" stroke="#e0e0e0" stroke-width="1"/><path d="M3 136 L7 139.5 L11 136" fill="none" stroke="#e0e0e0" stroke-width="1"/></svg>
<div style="position:absolute;left:1340px;top:563px;width:7px;height:60px;background:#d6d6d6;"></div>
<div style="position:absolute;left:1093px;top:687px;width:113px;height:25px;background:#eeeeee;"></div>
<div style="position:absolute;left:1127.00px;top:693.88px;font:normal 12.5px/1 'Liberation Sans', sans-serif;color:#16868b;white-space:pre;transform:scaleX(0.8749);transform-origin:left top;">CANCEL</div>
<div style="position:absolute;left:1222px;top:687px;width:113px;height:25px;background:#0f7c82;border-radius:1px;"></div>
<div style="position:absolute;left:1258.10px;top:693.88px;font:normal 12.5px/1 'Liberation Sans', sans-serif;color:#ffffff;white-space:pre;transform:scaleX(0.8405);transform-origin:left top;">UPDATE</div>
<svg style="position:absolute;left:1351px;top:86px" width="14" height="642"><path d="M3 10 L7 6.5 L11 10" fill="none" stroke="#e6dde2" stroke-width="1"/><path d="M3 632 L7 635.5 L11 632" fill="none" stroke="#e6dde2" stroke-width="1"/></svg>
<div style="position:absolute;left:12px;top:62px;width:58px;height:666px;background:#0e7b81;"></div>
<div style="position:absolute;left:69px;top:62px;width:1px;height:666px;background:#0c6b71;"></div>
<svg style="position:absolute;left:0;top:0" width="70" height="728"><rect x="32" y="78" width="17" height="12.5" fill="none" stroke="#ffffff" stroke-width="2"/><rect x="32" y="83.8" width="17" height="1.6" fill="#ffffff"/><rect x="37.2" y="84" width="1.5" height="6" fill="#ffffff"/><rect x="42.6" y="84" width="1.5" height="6" fill="#ffffff"/><circle cx="37.8" cy="125.2" r="5.3" fill="none" stroke="#ffffff" stroke-width="2"/><path d="M41.5 129 L48.2 135.7" stroke="#ffffff" stroke-width="2.2"/><path d="M34.5 166 Q34.5 164.8 35.7 164.8 H40.5 L42.3 166.6 H48.3 Q49.5 166.6 49.5 167.8 V174 Q49.5 175.2 48.3 175.2 H35.7 Q34.5 175.2 34.5 174 Z" fill="#ffffff"/><path d="M32.3 167.5 V177.6 H47" fill="none" stroke="#ffffff" stroke-width="1.7"/><circle cx="40.4" cy="216" r="8.7" fill="#ffffff"/><path d="M35.3 215.8 L38.8 219.2 L45.5 212.5" fill="none" stroke="#0e7b81" stroke-width="2"/><rect x="43.2" y="199.3" width="12.5" height="14" rx="2.5" fill="#ffffff" stroke="#0e7b81" stroke-width="1.2"/><circle cx="40.6" cy="260" r="9" fill="#ffffff"/><text x="40.6" y="265.6" text-anchor="middle" font-family="Liberation Sans" font-weight="bold" font-size="15" fill="#0e7b81">$</text><rect x="31.7" y="295.3" width="18" height="17.5" rx="2" fill="#ffffff"/><circle cx="40.6" cy="300.8" r="2.6" fill="#0e7b81"/><path d="M34.5 309.5 Q34.5 305.5 40.6 305.5 Q46.7 305.5 46.7 309.5 Z" fill="#0e7b81"/><rect x="32" y="339.6" width="17" height="1.8" fill="#ffffff"/><path d="M32.8 343 H48.2 L49.6 348 V350 H31.4 V348 Z" fill="#ffffff"/><path d="M32.5 349 V356 H41.5 V349" fill="none" stroke="#ffffff" stroke-width="1.8"/><rect x="46.5" y="349" width="1.8" height="7" fill="#ffffff"/><rect x="31.7" y="383.2" width="18" height="17.5" rx="2" fill="#ffffff"/><circle cx="40.6" cy="382.6" r="2" fill="#ffffff"/><circle cx="40.6" cy="383.6" r="0.8" fill="#0e7b81"/><text x="40.6" y="397" text-anchor="middle" font-family="Liberation Sans" font-weight="bold" font-size="12" fill="#0e7b81">?</text><rect x="31.6" y="427" width="18" height="17.6" rx="2" fill="#ffffff"/><rect x="37.5" y="425.5" width="6.2" height="3" rx="1" fill="#ffffff"/><circle cx="40.6" cy="426.6" r="0.8" fill="#0e7b81"/><rect x="35.2" y="431.5" width="10.8" height="1.5" fill="#0e7b81"/><rect x="35.2" y="435" width="10.8" height="1.5" fill="#0e7b81"/><rect x="35.2" y="438.6" width="7.5" height="1.5" fill="#0e7b81"/><path d="M32.5 470.5 H39.5 L50 481 Q50.8 481.8 50 482.6 L43.8 488.8 Q43 489.6 42.2 488.8 L31.5 478.2 V471.5 Q31.5 470.5 32.5 470.5 Z" fill="#ffffff"/><circle cx="35" cy="474" r="1.3" fill="#0e7b81"/><rect x="38.8" y="513.8" width="3.6" height="4" fill="#ffffff" transform="rotate(0 40.6 524)"/><rect x="38.8" y="513.8" width="3.6" height="4" fill="#ffffff" transform="rotate(60 40.6 524)"/><rect x="38.8" y="513.8" width="3.6" height="4" fill="#ffffff" transform="rotate(120 40.6 524)"/><rect x="38.8" y="513.8" width="3.6" height="4" fill="#ffffff" transform="rotate(180 40.6 524)"/><rect x="38.8" y="513.8" width="3.6" height="4" fill="#ffffff" transform="rotate(240 40.6 524)"/><rect x="38.8" y="513.8" width="3.6" height="4" fill="#ffffff" transform="rotate(300 40.6 524)"/><circle cx="40.6" cy="524" r="7.4" fill="#ffffff"/><circle cx="40.6" cy="524" r="3" fill="#0e7b81"/><circle cx="40.6" cy="701.5" r="4.5" fill="#ffffff"/><path d="M31.2 715 V712.5 Q31.2 708 40.6 708 Q50 708 50 712.5 V715 Z" fill="#ffffff"/><path d="M3 390 L8 394.5 L3 399 Z" fill="#ffffff"/></svg>
<div style="position:absolute;left:46.00px;top:202.00px;font:bold 10px/1 'Liberation Sans', sans-serif;color:#555555;white-space:pre;">6</div>
<svg style="position:absolute;left:760px;top:75px" width="70" height="60"><path d="M13.8 10.6 L45 42" stroke="#ff0000" stroke-width="2.9" stroke-linecap="round"/><path d="M55.4 53.2 L42.2 46.3 L48.8 40.2 Z" fill="#ff0000" stroke="#ff0000" stroke-width="1" stroke-linejoin="round"/></svg></div></body></html>
